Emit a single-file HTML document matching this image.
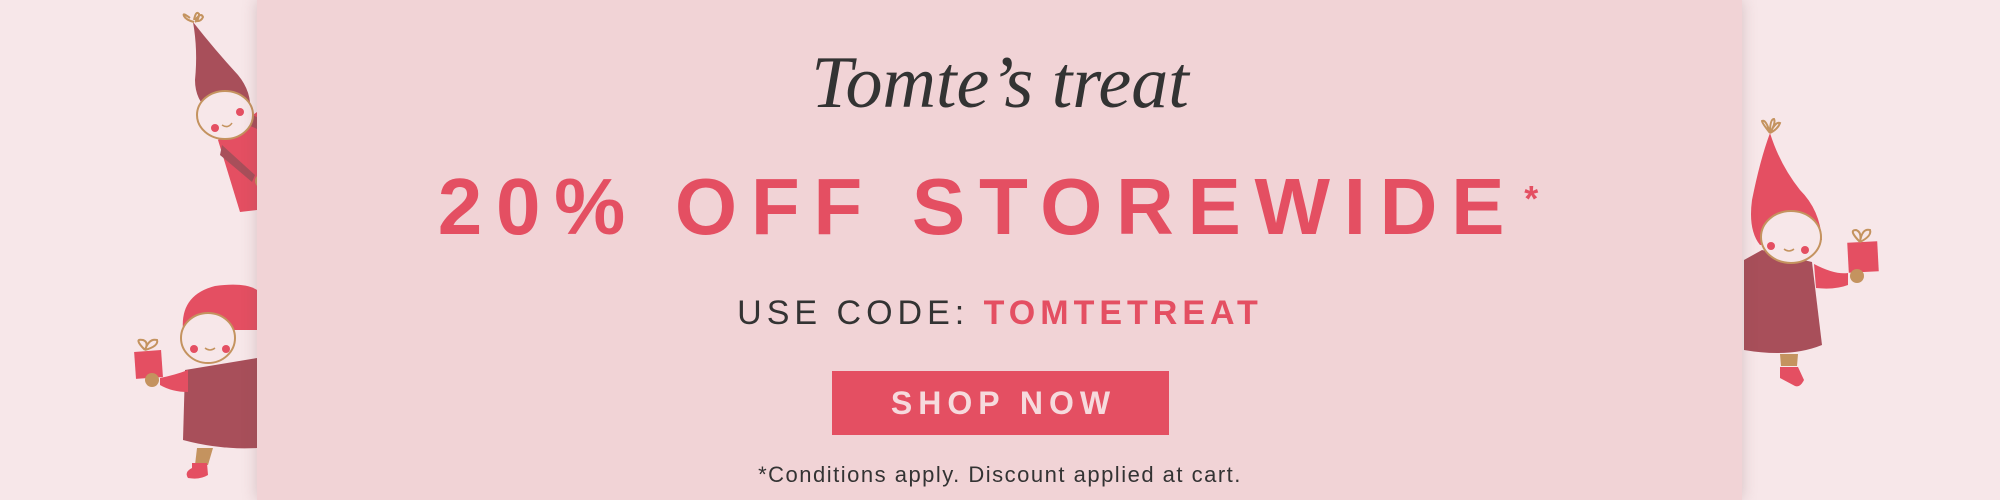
<!DOCTYPE html>
<html><head><meta charset="utf-8"><style>
html,body{margin:0;padding:0}
body{width:2000px;height:500px;background:#f7e7e9;position:relative;overflow:hidden;font-family:"Liberation Sans",sans-serif}
#panel{position:absolute;left:257px;top:0;width:1485px;height:500px;background:#f1d3d6;box-shadow:0 0 14px rgba(120,80,85,.25)}
.t{position:absolute;left:0;width:2000px;text-align:center;white-space:nowrap}
svg{position:absolute;left:0;top:0}
</style></head><body>
<svg width="2000" height="500" viewBox="0 0 2000 500">
 <path d="M193 22 Q215 50 238 75 Q252 92 250 112 L210 112 Q195 100 195 80 Q198 50 193 22Z" fill="#a84f5a"/>
 <path d="M190 18 q-8-6 -6-2 q2 4 10 6 M194 20 q2-10 5-6 q0 6 -4 8 M195 20 q6-8 8-3 q-2 5 -8 4" stroke="#c4935f" stroke-width="2" fill="none"/>
 <path d="M218 140 L257 112 L257 210 L240 212 Z" fill="#e44f62"/>
 <path d="M240 112 Q270 118 285 138 L280 145 Q262 128 238 122Z" fill="#a84f5a"/>
 <circle cx="288" cy="143" r="6" fill="#c4935f"/>
 <path d="M222 145 L255 175 L252 182 L220 155Z" fill="#a84f5a"/>
 <circle cx="262" cy="181" r="7" fill="#c4935f"/>
 <ellipse cx="225" cy="115" rx="28" ry="24" fill="#f7e7e9" stroke="#c4935f" stroke-width="2"/>
 <circle cx="215" cy="128" r="4" fill="#e44f62"/><circle cx="240" cy="112" r="4" fill="#e44f62"/>
 <path d="M222 125 q6 4 10-2" stroke="#c4935f" stroke-width="1.5" fill="none"/>
 <path d="M183 330 Q180 295 215 286 Q245 282 257 290 L257 330 Z" fill="#e44f62"/>
 <path d="M185 370 L257 358 L257 448 Q220 450 183 440 Z" fill="#a84f5a"/>
 <path d="M160 378 Q175 375 188 370 L188 392 Q172 392 160 385Z" fill="#e44f62"/>
 <rect x="135" y="351" width="27" height="27" fill="#e44f62" transform="rotate(-4 148 364)"/>
 <path d="M145 350 q-12-12 -2-10 q6 2 2 10 q4-12 12-10 q2 6 -12 10" stroke="#c4935f" stroke-width="2" fill="none"/>
 <circle cx="152" cy="380" r="7" fill="#c4935f"/>
 <path d="M197 448 L213 448 L208 465 L195 465Z" fill="#c4935f"/>
 <path d="M192 463 L207 463 L208 475 Q200 480 188 478 Q184 472 192 468Z" fill="#e44f62"/>
 <ellipse cx="208" cy="338" rx="27" ry="25" fill="#f7e7e9" stroke="#c4935f" stroke-width="2"/>
 <circle cx="194" cy="349" r="4" fill="#e44f62"/><circle cx="226" cy="349" r="4" fill="#e44f62"/>
 <path d="M205 348 q5 4 10 0" stroke="#c4935f" stroke-width="1.5" fill="none"/>
 <path d="M1770 133 Q1760 160 1752 200 Q1748 230 1760 245 L1822 240 Q1820 210 1800 190 Q1780 165 1770 133Z" fill="#e44f62"/>
 <path d="M1770 133 q-8-10 -8-12 q4-2 8 12 q0-14 4-14 q2 4 -4 14 q6-12 10-10 q-2 6 -10 10" stroke="#c4935f" stroke-width="2" fill="none"/>
 <path d="M1744 260 L1762 250 L1812 262 L1822 345 Q1790 358 1744 350Z" fill="#a84f5a"/>
 <path d="M1814 264 Q1835 275 1848 273 L1848 285 Q1835 290 1816 288Z" fill="#e44f62"/>
 <rect x="1848" y="242" width="30" height="30" fill="#e44f62" transform="rotate(-3 1863 257)"/>
 <path d="M1860 242 q-12-12 -4-12 q6 2 4 12 q2-14 10-12 q2 6 -10 12" stroke="#c4935f" stroke-width="2" fill="none"/>
 <circle cx="1857" cy="276" r="7" fill="#c4935f"/>
 <path d="M1780 354 L1798 354 L1797 366 L1781 366Z" fill="#c4935f"/>
 <path d="M1780 367 L1798 367 L1804 380 Q1800 388 1795 386 L1780 378Z" fill="#e44f62"/>
 <ellipse cx="1791" cy="237" rx="30" ry="26" fill="#f7e7e9" stroke="#c4935f" stroke-width="2"/>
 <circle cx="1771" cy="246" r="4" fill="#e44f62"/><circle cx="1805" cy="250" r="4" fill="#e44f62"/>
 <path d="M1784 249 q5 4 10 0" stroke="#c4935f" stroke-width="1.5" fill="none"/>
</svg>
<div id="panel"></div>
<div class="t" style="top:38px;font-family:'Liberation Serif',serif;font-style:italic;font-size:74px;color:#333;line-height:90px;left:0px">Tomte’s treat</div>
<div class="t" style="top:162px;font-size:80px;font-weight:bold;color:#e44f62;line-height:90px;letter-spacing:13.7px;left:-22px">20% OFF STOREWIDE<span style="position:absolute;font-size:36px;margin-top:-8px;margin-left:6px">*</span></div>
<div class="t" style="top:293px;font-size:34px;line-height:40px;letter-spacing:5px;color:#333">USE CODE: <b style="color:#e44f62;letter-spacing:5px">TOMTETREAT</b></div>
<div style="position:absolute;left:832px;top:371px;width:337px;height:64px;background:#e44f62;color:#f6dadd;font-weight:bold;font-size:32px;letter-spacing:6px;line-height:64px;text-align:center;text-indent:6px">SHOP NOW</div>
<div class="t" style="top:461px;font-size:22px;line-height:28px;letter-spacing:1.5px;color:#333">*Conditions apply. Discount applied at cart.</div>
</body></html>
